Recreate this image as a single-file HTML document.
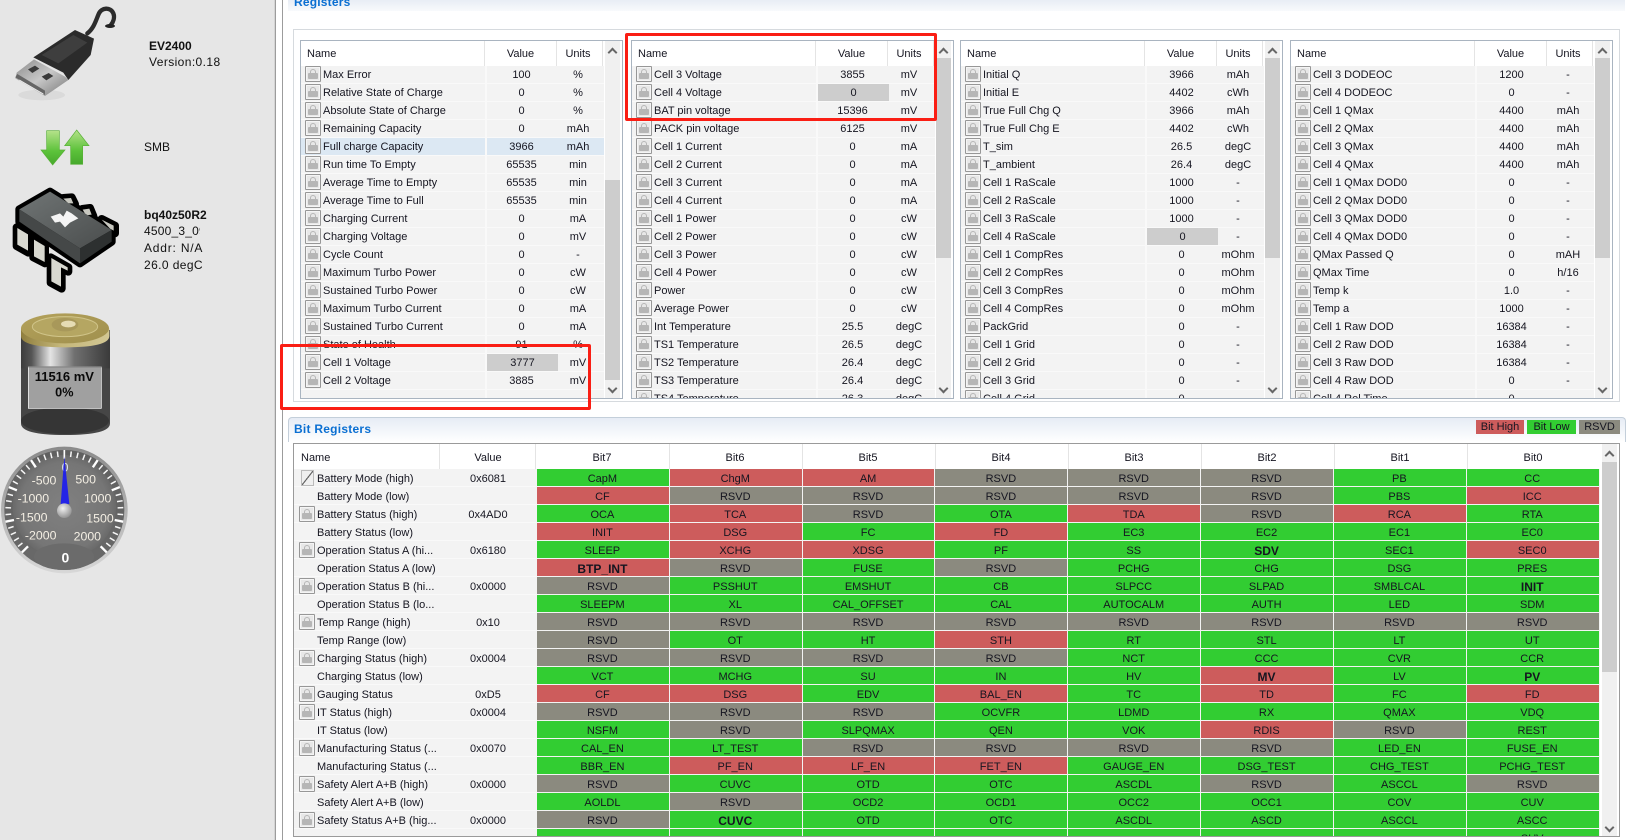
<!DOCTYPE html>
<html><head><meta charset="utf-8"><title>bq Studio Registers</title>
<style>
html,body{margin:0;padding:0;background:#fff}
body{position:relative;width:1627px;height:840px;overflow:hidden;font:11px/18px "Liberation Sans",Arial,sans-serif;color:#151520}
.abs,.tb,.bt{position:absolute}
#left{position:absolute;left:0;top:0;width:274px;height:840px;background:#e6e6e6}
.lt{position:absolute;font-size:12px;line-height:16px;white-space:nowrap;color:#111;overflow:hidden}
.v{position:absolute;top:0;bottom:0;width:1px}
.tb{top:40px;width:321px;height:357px;border:1px solid #a9b4c0;background:#fff;overflow:hidden}
.hd{position:relative;height:25px;background:#fff;line-height:27px}
.hd span{position:absolute;top:0;text-align:center}
.hd i{position:absolute;top:0;height:25px;width:1px;background:#e4e4e4}
.r{position:relative;width:303px;height:17px;line-height:19px;background:#f3f3f3;border-bottom:1px solid #f9f9f9;white-space:nowrap}
.r a{position:absolute;left:22px;top:0}
.r em{position:absolute;left:185px;width:71px;height:17px;top:0;font-style:normal;text-align:center}
.r em.c{background:#cdcdcd;left:186px}
.r span{position:absolute;left:254px;width:46px;top:0;text-align:center}
.r:before{content:"";position:absolute;left:184px;top:0;bottom:0;width:2px;background:#f9f9f9}
.r.s{background:#dce8f3}
.l{position:absolute;left:4px;top:0;width:16px;height:16px;box-sizing:border-box;border:1px solid #979797;background:#e8e8e8;border-radius:1px;box-shadow:inset 0 0 0 1px #f5f5f5}
.l:before{content:"";position:absolute;left:2px;top:6px;width:10px;height:6px;background:#b6b6b6;border-radius:1px}
.l:after{content:"";position:absolute;left:4px;top:2px;width:6px;height:5px;box-sizing:border-box;border:1.5px solid #b6b6b6;border-bottom:0;border-radius:3px 3px 0 0}
.sb{position:absolute;left:304px;top:0;width:15px;height:357px;background:#f0f0f0}
.th{position:absolute;left:0;width:15px;background:#cdcdcd}
.cu,.cd{position:absolute;left:4px;width:5px;height:5px;border:2px solid #666;border-right:0;border-bottom:0;transform:rotate(45deg)}
.cd{transform:rotate(225deg)}
.bt{left:293px;top:443px;width:1325px;height:392px;border:1px solid #9a9a9a;background:#fff;overflow:hidden}
.bh{position:relative;height:25px;line-height:28px;background:#fff}
.bh span{position:absolute;top:0;text-align:center}
.bh i{position:absolute;top:0;height:25px;width:1px;background:#e4e4e4}
.w{position:relative;display:grid;grid-template-columns:repeat(8,132.83px);padding-left:243px;width:1063px;height:18px;line-height:20px;white-space:nowrap;background:#f3f3f3}
.w:after{content:"";position:absolute;left:0;width:243px;bottom:0;height:1px;background:#f9f9f9}
.w .l{left:5px;top:1px}
.w a{position:absolute;left:23px;top:0}
.w em{position:absolute;left:146px;width:96px;top:0;font-style:normal;text-align:center}
.w b{display:block;height:17px;margin-right:1px;text-align:center;font-weight:normal;padding-right:1px;box-sizing:border-box}
.w b.B{font-weight:bold;font-size:12px}
.g{background:#32cd32}.e{background:#cd5c5c}.k{background:#8b8a7f}
.p{position:absolute;left:7px;top:1px;width:13px;height:16px;border:1px solid #bbb;box-sizing:border-box;background:linear-gradient(to bottom right,#efefef 46%,#666 47%,#666 53%,#efefef 54%)}
.lg{position:absolute;top:420px;height:14px;line-height:15px;text-align:center}
.red{position:absolute;border:3px solid #fa1e14;border-radius:2px;box-sizing:border-box}
</style></head><body>
<div id="left">
<svg width="274" height="600" viewBox="0 0 274 600" style="position:absolute;left:0;top:0">
<defs>
<linearGradient id="me" x1="0" y1="0" x2="1" y2="1"><stop offset="0" stop-color="#8a8a8a"/><stop offset=".5" stop-color="#c8c8c8"/><stop offset="1" stop-color="#777"/></linearGradient>
<linearGradient id="gr" x1="0" y1="0" x2="0" y2="1"><stop offset="0" stop-color="#b5e28a"/><stop offset=".6" stop-color="#5cc23a"/><stop offset="1" stop-color="#46a82c"/></linearGradient>
<linearGradient id="cf" x1="0" y1="0" x2="1" y2="1"><stop offset="0" stop-color="#707575"/><stop offset="1" stop-color="#4a4d4d"/></linearGradient>
<linearGradient id="bb" x1="0" y1="0" x2="1" y2="0"><stop offset="0" stop-color="#3c3c3c"/><stop offset=".12" stop-color="#555"/><stop offset=".33" stop-color="#e4e4e4"/><stop offset=".6" stop-color="#707070"/><stop offset="1" stop-color="#3a3a3a"/></linearGradient>
<linearGradient id="gd" x1="0" y1="0" x2="1" y2="0"><stop offset="0" stop-color="#8f7e3e"/><stop offset=".45" stop-color="#c5b77a"/><stop offset="1" stop-color="#d2c794"/></linearGradient>
<linearGradient id="gt" x1="0" y1="0" x2="1" y2="1"><stop offset="0" stop-color="#b3a15a"/><stop offset="1" stop-color="#a0904e"/></linearGradient>
<linearGradient id="rim" x1="0" y1="0" x2="0" y2="1"><stop offset="0" stop-color="#8a8a8a"/><stop offset="1" stop-color="#d8d8d8"/></linearGradient>
<linearGradient id="fc" x1="0" y1="0" x2="0" y2="1"><stop offset="0" stop-color="#606060"/><stop offset="1" stop-color="#696969"/></linearGradient>
<radialGradient id="in" cx=".5" cy=".5" r=".5"><stop offset="0" stop-color="#808080"/><stop offset=".85" stop-color="#767676"/><stop offset="1" stop-color="#6a6a6a"/></radialGradient>
<radialGradient id="hub" cx=".4" cy=".35" r=".7"><stop offset="0" stop-color="#f0f0f0"/><stop offset="1" stop-color="#8e8e8e"/></radialGradient>
</defs>
<g transform="scale(.33333)">
<!-- USB -->
<path d="M262,100C282,85 288,60 296,42C304,22 332,20 340,40C345,52 340,66 332,76" fill="none" stroke="#2c2c2c" stroke-width="13" stroke-linecap="round"/>
<ellipse cx="330" cy="78" rx="15" ry="6" fill="#222"/>
<ellipse cx="125" cy="285" rx="70" ry="16" fill="#dadada"/>
<path d="M100,172L225,90L282,116L272,165L205,240L190,218Z" fill="#2b2b2b"/>
<path d="M125,165L220,105L262,128L175,190Z" fill="#3e3e3e"/>
<path d="M102,178L195,230L205,240L135,288L46,235L50,218Z" fill="url(#me)"/>
<path d="M46,232L135,285L135,272L52,222Z" fill="#666"/>
<path d="M84,208L105,197L118,206L97,219ZM125,230L146,219L160,228L139,241Z" fill="#3a3a3a"/>
<path d="M58,240L130,282" stroke="#eee" stroke-width="3"/>
<!-- arrows -->
<path d="M140,392H178V450H195L158,495L123,450H140Z" fill="url(#gr)" stroke="#58b036" stroke-width="2"/>
<path d="M230,390L267,437H248V493H212V437H194Z" fill="url(#gr)" stroke="#58b036" stroke-width="2"/>
<!-- chip -->
<g stroke="#000" stroke-width="24" stroke-linejoin="round" fill="#000">
<path d="M50,682L85,702V758L50,738Z"/><path d="M100,717L135,737V790L100,772Z"/><path d="M152,772L205,802V815L185,805V866L152,848Z"/>
<path d="M190,594L215,592L225,612L205,612Z"/><path d="M247,627L270,624L280,648L258,650Z"/><path d="M305,657L345,677V700L330,690Z"/>
<path d="M58,628L150,575L335,690V725L240,790L58,665Z"/>
</g>
<path d="M52,684L84,703V752L52,734Z M102,719L134,738V786L102,769Z M154,774L203,802V812L183,802V860L154,844Z" fill="#d8d8d0"/>
<path d="M190,596L213,594L220,610L205,610Z M248,629L268,626L275,644L258,646Z M305,659L341,677V692L330,686Z" fill="#c8c8c0"/>
<path d="M58,628L150,575L335,690L240,745Z" fill="url(#cf)"/>
<path d="M58,628L240,745V790L58,665Z" fill="#454848"/>
<path d="M240,745L335,690V725L240,790Z" fill="#2d3030"/>
<path d="M152,650L180,640L190,650L200,632L215,640L235,655L210,668L195,682L180,665L165,668Z" fill="#f4f4f4"/>
</g>
<g transform="translate(0,300) scale(.33333)">
<!-- battery -->
<path d="M63,90V370Q63,405 195,405Q330,405 330,370V90Z" fill="#464646"/>
<path d="M63,110H330V205H63Z" fill="url(#bb)"/>
<ellipse cx="195" cy="362" rx="132" ry="40" fill="#353535"/>
<path d="M63,85V108Q63,142 195,142Q328,142 328,108V85Z" fill="url(#gd)"/>
<ellipse cx="195" cy="85" rx="132" ry="45" fill="url(#gt)"/>
<ellipse cx="195" cy="80" rx="98" ry="30" fill="#b5a662" stroke="#d0c489" stroke-width="3"/>
<ellipse cx="195" cy="74" rx="40" ry="20" fill="#a8985a"/>
<ellipse cx="205" cy="72" rx="22" ry="10" fill="#e6dcb4"/>
<rect x="85" y="201" width="219" height="124" fill="#a0a0a0" stroke="#fff" stroke-width="2"/>
<rect x="85" y="199" width="219" height="4" fill="#888"/>
<text x="193" y="243" text-anchor="middle" font-family="Liberation Sans" font-weight="bold" font-size="39" fill="#0a0a0a">11516 mV</text>
<text x="193" y="290" text-anchor="middle" font-family="Liberation Sans" font-weight="bold" font-size="38" fill="#0a0a0a">0%</text>
<!-- gauge -->
<circle cx="193" cy="630" r="190" fill="url(#rim)"/>
<circle cx="193" cy="630" r="180" fill="url(#fc)"/>
<circle cx="193" cy="620" r="155" fill="url(#in)"/>
<ellipse cx="192" cy="770" rx="90" ry="40" fill="#6b6b6b"/>
<g stroke="#f6f6f6" stroke-width="4.5">
<path d="M193 453v17" transform="rotate(-128.25 193 630)"/><path d="M193 453v17" transform="rotate(-121.5 193 630)"/><path d="M193 453v17" transform="rotate(-114.75 193 630)"/><path d="M193 453v17" transform="rotate(-108 193 630)"/>
<path d="M193 453v17" transform="rotate(-94.5 193 630)"/><path d="M193 453v17" transform="rotate(-87.75 193 630)"/><path d="M193 453v17" transform="rotate(-81 193 630)"/><path d="M193 453v17" transform="rotate(-74.25 193 630)"/>
<path d="M193 453v17" transform="rotate(-60.75 193 630)"/><path d="M193 453v17" transform="rotate(-54 193 630)"/><path d="M193 453v17" transform="rotate(-47.25 193 630)"/><path d="M193 453v17" transform="rotate(-40.5 193 630)"/>
<path d="M193 453v17" transform="rotate(-27 193 630)"/><path d="M193 453v17" transform="rotate(-20.25 193 630)"/><path d="M193 453v17" transform="rotate(-13.5 193 630)"/><path d="M193 453v17" transform="rotate(-6.75 193 630)"/>
<path d="M193 453v17" transform="rotate(6.75 193 630)"/><path d="M193 453v17" transform="rotate(13.5 193 630)"/><path d="M193 453v17" transform="rotate(20.25 193 630)"/><path d="M193 453v17" transform="rotate(27 193 630)"/>
<path d="M193 453v17" transform="rotate(40.5 193 630)"/><path d="M193 453v17" transform="rotate(47.25 193 630)"/><path d="M193 453v17" transform="rotate(54 193 630)"/><path d="M193 453v17" transform="rotate(60.75 193 630)"/>
<path d="M193 453v17" transform="rotate(74.25 193 630)"/><path d="M193 453v17" transform="rotate(81 193 630)"/><path d="M193 453v17" transform="rotate(87.75 193 630)"/><path d="M193 453v17" transform="rotate(94.5 193 630)"/>
<path d="M193 453v17" transform="rotate(108 193 630)"/><path d="M193 453v17" transform="rotate(114.75 193 630)"/><path d="M193 453v17" transform="rotate(121.5 193 630)"/><path d="M193 453v17" transform="rotate(128.25 193 630)"/>
</g>
<g stroke="#fff" stroke-width="7">
<path d="M193 450v26" transform="rotate(-135 193 630)"/><path d="M193 450v26" transform="rotate(-101.25 193 630)"/><path d="M193 450v26" transform="rotate(-67.5 193 630)"/><path d="M193 450v26" transform="rotate(-33.75 193 630)"/><path d="M193 450v26" stroke-width="5"/><path d="M193 450v26" transform="rotate(33.75 193 630)"/><path d="M193 450v26" transform="rotate(67.5 193 630)"/><path d="M193 450v26" transform="rotate(101.25 193 630)"/><path d="M193 450v26" transform="rotate(135 193 630)"/>
</g>
<g font-family="Liberation Sans" font-size="37" fill="#f4efe4" text-anchor="middle">
<text x="132" y="553">-500</text><text x="257" y="550">500</text><text x="100" y="607">-1000</text><text x="293" y="607">1000</text><text x="95" y="664">-1500</text><text x="300" y="668">1500</text><text x="122" y="718">-2000</text><text x="262" y="721">2000</text>
<text x="195" y="514" fill="#dfe4f4">0</text>
</g>
<path d="M193,470L208,612H182Z" fill="#1c1cf0" opacity=".92"/>
<circle cx="193" cy="632" r="22" fill="url(#hub)"/>
<text x="196" y="787" text-anchor="middle" font-family="Liberation Sans" font-weight="bold" font-size="42" fill="#fff">0</text>
</g>
</svg>
<div class="lt" style="left:149px;top:38px;font-weight:bold">EV2400</div>
<div class="lt" style="left:149px;top:54px;letter-spacing:.4px">Version:0.18</div>
<div class="lt" style="left:144px;top:139px">SMB</div>
<div class="lt" style="left:144px;top:207px;font-weight:bold">bq40z50R2</div>
<div class="lt" style="left:144px;top:223px;width:56px;letter-spacing:.2px">4500_3_09</div>
<div class="lt" style="left:144px;top:240px;width:60px;letter-spacing:.8px">Addr: N/A</div>
<div class="lt" style="left:144px;top:257px;width:60px;letter-spacing:.4px">26.0 degC</div>
</div>
<div class="v" style="left:274px;background:#d4d4d4"></div>
<div class="v" style="left:275px;background:#9c9c9c"></div>
<div class="v" style="left:282px;background:#9c9c9c"></div>

<!-- Registers header -->
<div class="abs" style="left:288px;top:0;width:1337px;height:11px;background:linear-gradient(#e8edf5,#f8fafc)"></div>
<div class="abs" style="left:294px;top:-7px;font-size:12px;font-weight:bold;color:#0a6fd2;letter-spacing:.2px">Registers</div>
<div class="abs" style="left:293px;top:29px;width:1325px;height:371px;border:1px solid #d6dade"></div>

<!-- Table 1 -->
<div class="tb" style="left:300px">
<div class="hd"><span style="left:6px">Name</span><span style="left:184px;width:71px">Value</span><span style="left:254px;width:46px">Units</span><i style="left:183px"></i><i style="left:255px"></i><i style="left:301px"></i></div>
<div class="r"><i class="l"></i><a>Max Error</a><em>100</em><span>%</span></div>
<div class="r"><i class="l"></i><a>Relative State of Charge</a><em>0</em><span>%</span></div>
<div class="r"><i class="l"></i><a>Absolute State of Charge</a><em>0</em><span>%</span></div>
<div class="r"><i class="l"></i><a>Remaining Capacity</a><em>0</em><span>mAh</span></div>
<div class="r s"><i class="l"></i><a>Full charge Capacity</a><em>3966</em><span>mAh</span></div>
<div class="r"><i class="l"></i><a>Run time To Empty</a><em>65535</em><span>min</span></div>
<div class="r"><i class="l"></i><a>Average Time to Empty</a><em>65535</em><span>min</span></div>
<div class="r"><i class="l"></i><a>Average Time to Full</a><em>65535</em><span>min</span></div>
<div class="r"><i class="l"></i><a>Charging Current</a><em>0</em><span>mA</span></div>
<div class="r"><i class="l"></i><a>Charging Voltage</a><em>0</em><span>mV</span></div>
<div class="r"><i class="l"></i><a>Cycle Count</a><em>0</em><span>-</span></div>
<div class="r"><i class="l"></i><a>Maximum Turbo Power</a><em>0</em><span>cW</span></div>
<div class="r"><i class="l"></i><a>Sustained Turbo Power</a><em>0</em><span>cW</span></div>
<div class="r"><i class="l"></i><a>Maximum Turbo Current</a><em>0</em><span>mA</span></div>
<div class="r"><i class="l"></i><a>Sustained Turbo Current</a><em>0</em><span>mA</span></div>
<div class="r"><i class="l"></i><a>State of Health</a><em>91</em><span>%</span></div>
<div class="r"><i class="l"></i><a>Cell 1 Voltage</a><em class="c">3777</em><span>mV</span></div>
<div class="r"><i class="l"></i><a>Cell 2 Voltage</a><em>3885</em><span>mV</span></div>
<div class="r"></div>
<div class="sb"><div class="th" style="top:139px;height:200px"></div><div class="cu" style="top:8px"></div><div class="cd" style="top:344px"></div></div>
</div>

<!-- Table 2 -->
<div class="tb" style="left:631px">
<div class="hd"><span style="left:6px">Name</span><span style="left:184px;width:71px">Value</span><span style="left:254px;width:46px">Units</span><i style="left:183px"></i><i style="left:255px"></i><i style="left:301px"></i></div>
<div class="r"><i class="l"></i><a>Cell 3 Voltage</a><em>3855</em><span>mV</span></div>
<div class="r"><i class="l"></i><a>Cell 4 Voltage</a><em class="c">0</em><span>mV</span></div>
<div class="r"><i class="l"></i><a>BAT pin voltage</a><em>15396</em><span>mV</span></div>
<div class="r"><i class="l"></i><a>PACK pin voltage</a><em>6125</em><span>mV</span></div>
<div class="r"><i class="l"></i><a>Cell 1 Current</a><em>0</em><span>mA</span></div>
<div class="r"><i class="l"></i><a>Cell 2 Current</a><em>0</em><span>mA</span></div>
<div class="r"><i class="l"></i><a>Cell 3 Current</a><em>0</em><span>mA</span></div>
<div class="r"><i class="l"></i><a>Cell 4 Current</a><em>0</em><span>mA</span></div>
<div class="r"><i class="l"></i><a>Cell 1 Power</a><em>0</em><span>cW</span></div>
<div class="r"><i class="l"></i><a>Cell 2 Power</a><em>0</em><span>cW</span></div>
<div class="r"><i class="l"></i><a>Cell 3 Power</a><em>0</em><span>cW</span></div>
<div class="r"><i class="l"></i><a>Cell 4 Power</a><em>0</em><span>cW</span></div>
<div class="r"><i class="l"></i><a>Power</a><em>0</em><span>cW</span></div>
<div class="r"><i class="l"></i><a>Average Power</a><em>0</em><span>cW</span></div>
<div class="r"><i class="l"></i><a>Int Temperature</a><em>25.5</em><span>degC</span></div>
<div class="r"><i class="l"></i><a>TS1 Temperature</a><em>26.5</em><span>degC</span></div>
<div class="r"><i class="l"></i><a>TS2 Temperature</a><em>26.4</em><span>degC</span></div>
<div class="r"><i class="l"></i><a>TS3 Temperature</a><em>26.4</em><span>degC</span></div>
<div class="r"><i class="l"></i><a>TS4 Temperature</a><em>26.3</em><span>degC</span></div>
<div class="sb"><div class="th" style="top:17px;height:200px"></div><div class="cu" style="top:8px"></div><div class="cd" style="top:344px"></div></div>
</div>

<!-- Table 3 -->
<div class="tb" style="left:960px">
<div class="hd"><span style="left:6px">Name</span><span style="left:184px;width:71px">Value</span><span style="left:254px;width:46px">Units</span><i style="left:183px"></i><i style="left:255px"></i><i style="left:301px"></i></div>
<div class="r"><i class="l"></i><a>Initial Q</a><em>3966</em><span>mAh</span></div>
<div class="r"><i class="l"></i><a>Initial E</a><em>4402</em><span>cWh</span></div>
<div class="r"><i class="l"></i><a>True Full Chg Q</a><em>3966</em><span>mAh</span></div>
<div class="r"><i class="l"></i><a>True Full Chg E</a><em>4402</em><span>cWh</span></div>
<div class="r"><i class="l"></i><a>T_sim</a><em>26.5</em><span>degC</span></div>
<div class="r"><i class="l"></i><a>T_ambient</a><em>26.4</em><span>degC</span></div>
<div class="r"><i class="l"></i><a>Cell 1 RaScale</a><em>1000</em><span>-</span></div>
<div class="r"><i class="l"></i><a>Cell 2 RaScale</a><em>1000</em><span>-</span></div>
<div class="r"><i class="l"></i><a>Cell 3 RaScale</a><em>1000</em><span>-</span></div>
<div class="r"><i class="l"></i><a>Cell 4 RaScale</a><em class="c">0</em><span>-</span></div>
<div class="r"><i class="l"></i><a>Cell 1 CompRes</a><em>0</em><span>mOhm</span></div>
<div class="r"><i class="l"></i><a>Cell 2 CompRes</a><em>0</em><span>mOhm</span></div>
<div class="r"><i class="l"></i><a>Cell 3 CompRes</a><em>0</em><span>mOhm</span></div>
<div class="r"><i class="l"></i><a>Cell 4 CompRes</a><em>0</em><span>mOhm</span></div>
<div class="r"><i class="l"></i><a>PackGrid</a><em>0</em><span>-</span></div>
<div class="r"><i class="l"></i><a>Cell 1 Grid</a><em>0</em><span>-</span></div>
<div class="r"><i class="l"></i><a>Cell 2 Grid</a><em>0</em><span>-</span></div>
<div class="r"><i class="l"></i><a>Cell 3 Grid</a><em>0</em><span>-</span></div>
<div class="r"><i class="l"></i><a>Cell 4 Grid</a><em>0</em><span>-</span></div>
<div class="sb"><div class="th" style="top:17px;height:200px"></div><div class="cu" style="top:8px"></div><div class="cd" style="top:344px"></div></div>
</div>

<!-- Table 4 -->
<div class="tb" style="left:1290px">
<div class="hd"><span style="left:6px">Name</span><span style="left:184px;width:71px">Value</span><span style="left:254px;width:46px">Units</span><i style="left:183px"></i><i style="left:255px"></i><i style="left:301px"></i></div>
<div class="r"><i class="l"></i><a>Cell 3 DODEOC</a><em>1200</em><span>-</span></div>
<div class="r"><i class="l"></i><a>Cell 4 DODEOC</a><em>0</em><span>-</span></div>
<div class="r"><i class="l"></i><a>Cell 1 QMax</a><em>4400</em><span>mAh</span></div>
<div class="r"><i class="l"></i><a>Cell 2 QMax</a><em>4400</em><span>mAh</span></div>
<div class="r"><i class="l"></i><a>Cell 3 QMax</a><em>4400</em><span>mAh</span></div>
<div class="r"><i class="l"></i><a>Cell 4 QMax</a><em>4400</em><span>mAh</span></div>
<div class="r"><i class="l"></i><a>Cell 1 QMax DOD0</a><em>0</em><span>-</span></div>
<div class="r"><i class="l"></i><a>Cell 2 QMax DOD0</a><em>0</em><span>-</span></div>
<div class="r"><i class="l"></i><a>Cell 3 QMax DOD0</a><em>0</em><span>-</span></div>
<div class="r"><i class="l"></i><a>Cell 4 QMax DOD0</a><em>0</em><span>-</span></div>
<div class="r"><i class="l"></i><a>QMax Passed Q</a><em>0</em><span>mAH</span></div>
<div class="r"><i class="l"></i><a>QMax Time</a><em>0</em><span>h/16</span></div>
<div class="r"><i class="l"></i><a>Temp k</a><em>1.0</em><span>-</span></div>
<div class="r"><i class="l"></i><a>Temp a</a><em>1000</em><span>-</span></div>
<div class="r"><i class="l"></i><a>Cell 1 Raw DOD</a><em>16384</em><span>-</span></div>
<div class="r"><i class="l"></i><a>Cell 2 Raw DOD</a><em>16384</em><span>-</span></div>
<div class="r"><i class="l"></i><a>Cell 3 Raw DOD</a><em>16384</em><span>-</span></div>
<div class="r"><i class="l"></i><a>Cell 4 Raw DOD</a><em>0</em><span>-</span></div>
<div class="r"><i class="l"></i><a>Cell 4 Rel Time</a><em>0</em><span>-</span></div>
<div class="sb"><div class="th" style="top:17px;height:200px"></div><div class="cu" style="top:8px"></div><div class="cd" style="top:344px"></div></div>
</div>

<!-- Bit Registers -->
<div class="abs" style="left:288px;top:417px;width:1336px;height:24px;border:1px solid #c4cfda;border-bottom:0;border-radius:4px 4px 0 0;background:linear-gradient(#e6ecf5,#fff)"></div>
<div class="abs" style="left:294px;top:420px;font-size:12px;font-weight:bold;color:#0a6fd2;letter-spacing:.25px">Bit Registers</div>
<div class="lg e" style="left:1476px;width:48px">Bit High</div>
<div class="lg g" style="left:1527px;width:49px">Bit Low</div>
<div class="lg k" style="left:1579px;width:41px">RSVD</div>

<div class="bt">
<div class="bh"><span style="left:7px">Name</span><span style="left:146px;width:96px">Value</span><i style="left:145px"></i><i style="left:241px"></i><span style="left:242px;width:132px">Bit7</span><i style="left:375px"></i><span style="left:375px;width:132px">Bit6</span><i style="left:508px"></i><span style="left:508px;width:132px">Bit5</span><i style="left:641px"></i><span style="left:641px;width:132px">Bit4</span><i style="left:774px"></i><span style="left:774px;width:132px">Bit3</span><i style="left:907px"></i><span style="left:907px;width:132px">Bit2</span><i style="left:1040px"></i><span style="left:1040px;width:132px">Bit1</span><i style="left:1173px"></i><span style="left:1173px;width:132px">Bit0</span></div>
<div class="w"><i class="p"></i><a>Battery Mode (high)</a><em>0x6081</em><b class="g">CapM</b><b class="e">ChgM</b><b class="e">AM</b><b class="k">RSVD</b><b class="k">RSVD</b><b class="k">RSVD</b><b class="g">PB</b><b class="g">CC</b></div>
<div class="w"><a>Battery Mode (low)</a><b class="e">CF</b><b class="k">RSVD</b><b class="k">RSVD</b><b class="k">RSVD</b><b class="k">RSVD</b><b class="k">RSVD</b><b class="g">PBS</b><b class="e">ICC</b></div>
<div class="w"><i class="l"></i><a>Battery Status (high)</a><em>0x4AD0</em><b class="g">OCA</b><b class="e">TCA</b><b class="k">RSVD</b><b class="g">OTA</b><b class="e">TDA</b><b class="k">RSVD</b><b class="e">RCA</b><b class="g">RTA</b></div>
<div class="w"><a>Battery Status (low)</a><b class="e">INIT</b><b class="e">DSG</b><b class="g">FC</b><b class="e">FD</b><b class="g">EC3</b><b class="g">EC2</b><b class="g">EC1</b><b class="g">EC0</b></div>
<div class="w"><i class="l"></i><a>Operation Status A (hi...</a><em>0x6180</em><b class="g">SLEEP</b><b class="e">XCHG</b><b class="e">XDSG</b><b class="g">PF</b><b class="g">SS</b><b class="g B">SDV</b><b class="g">SEC1</b><b class="e">SEC0</b></div>
<div class="w"><a>Operation Status A (low)</a><b class="e B">BTP_INT</b><b class="k">RSVD</b><b class="g">FUSE</b><b class="k">RSVD</b><b class="g">PCHG</b><b class="g">CHG</b><b class="g">DSG</b><b class="g">PRES</b></div>
<div class="w"><i class="l"></i><a>Operation Status B (hi...</a><em>0x0000</em><b class="k">RSVD</b><b class="g">PSSHUT</b><b class="g">EMSHUT</b><b class="g">CB</b><b class="g">SLPCC</b><b class="g">SLPAD</b><b class="g">SMBLCAL</b><b class="g B">INIT</b></div>
<div class="w"><a>Operation Status B (lo...</a><b class="g">SLEEPM</b><b class="g">XL</b><b class="g">CAL_OFFSET</b><b class="g">CAL</b><b class="g">AUTOCALM</b><b class="g">AUTH</b><b class="g">LED</b><b class="g">SDM</b></div>
<div class="w"><i class="l"></i><a>Temp Range (high)</a><em>0x10</em><b class="k">RSVD</b><b class="k">RSVD</b><b class="k">RSVD</b><b class="k">RSVD</b><b class="k">RSVD</b><b class="k">RSVD</b><b class="k">RSVD</b><b class="k">RSVD</b></div>
<div class="w"><a>Temp Range (low)</a><b class="k">RSVD</b><b class="g">OT</b><b class="g">HT</b><b class="e">STH</b><b class="g">RT</b><b class="g">STL</b><b class="g">LT</b><b class="g">UT</b></div>
<div class="w"><i class="l"></i><a>Charging Status (high)</a><em>0x0004</em><b class="k">RSVD</b><b class="k">RSVD</b><b class="k">RSVD</b><b class="k">RSVD</b><b class="g">NCT</b><b class="g">CCC</b><b class="g">CVR</b><b class="g">CCR</b></div>
<div class="w"><a>Charging Status (low)</a><b class="g">VCT</b><b class="g">MCHG</b><b class="g">SU</b><b class="g">IN</b><b class="g">HV</b><b class="e B">MV</b><b class="g">LV</b><b class="g B">PV</b></div>
<div class="w"><i class="l"></i><a>Gauging Status</a><em>0xD5</em><b class="e">CF</b><b class="e">DSG</b><b class="g">EDV</b><b class="e">BAL_EN</b><b class="g">TC</b><b class="e">TD</b><b class="g">FC</b><b class="e">FD</b></div>
<div class="w"><i class="l"></i><a>IT Status (high)</a><em>0x0004</em><b class="k">RSVD</b><b class="k">RSVD</b><b class="k">RSVD</b><b class="g">OCVFR</b><b class="g">LDMD</b><b class="g">RX</b><b class="g">QMAX</b><b class="g">VDQ</b></div>
<div class="w"><a>IT Status (low)</a><b class="g">NSFM</b><b class="k">RSVD</b><b class="g">SLPQMAX</b><b class="g">QEN</b><b class="g">VOK</b><b class="e">RDIS</b><b class="k">RSVD</b><b class="g">REST</b></div>
<div class="w"><i class="l"></i><a>Manufacturing Status (...</a><em>0x0070</em><b class="g">CAL_EN</b><b class="g">LT_TEST</b><b class="k">RSVD</b><b class="k">RSVD</b><b class="k">RSVD</b><b class="k">RSVD</b><b class="g">LED_EN</b><b class="g">FUSE_EN</b></div>
<div class="w"><a>Manufacturing Status (...</a><b class="g">BBR_EN</b><b class="e">PF_EN</b><b class="e">LF_EN</b><b class="e">FET_EN</b><b class="g">GAUGE_EN</b><b class="g">DSG_TEST</b><b class="g">CHG_TEST</b><b class="g">PCHG_TEST</b></div>
<div class="w"><i class="l"></i><a>Safety Alert A+B (high)</a><em>0x0000</em><b class="k">RSVD</b><b class="g">CUVC</b><b class="g">OTD</b><b class="g">OTC</b><b class="g">ASCDL</b><b class="k">RSVD</b><b class="g">ASCCL</b><b class="k">RSVD</b></div>
<div class="w"><a>Safety Alert A+B (low)</a><b class="g">AOLDL</b><b class="k">RSVD</b><b class="g">OCD2</b><b class="g">OCD1</b><b class="g">OCC2</b><b class="g">OCC1</b><b class="g">COV</b><b class="g">CUV</b></div>
<div class="w"><i class="l"></i><a>Safety Status A+B (hig...</a><em>0x0000</em><b class="k">RSVD</b><b class="g B">CUVC</b><b class="g">OTD</b><b class="g">OTC</b><b class="g">ASCDL</b><b class="g">ASCD</b><b class="g">ASCCL</b><b class="g">ASCC</b></div>
<div class="w"><b class="g"></b><b class="g"></b><b class="g"></b><b class="g"></b><b class="g"></b><b class="g"></b><b class="g"></b><b class="g">SUV</b></div>
<div class="sb" style="left:1308px;height:392px"><div class="th" style="top:18px;height:210px"></div><div class="cu" style="top:8px"></div><div class="cd" style="top:380px"></div></div>
</div>

<div class="red" style="left:280px;top:344px;width:311px;height:66px"></div>
<div class="red" style="left:625px;top:33px;width:312px;height:88px"></div>
</body></html>
